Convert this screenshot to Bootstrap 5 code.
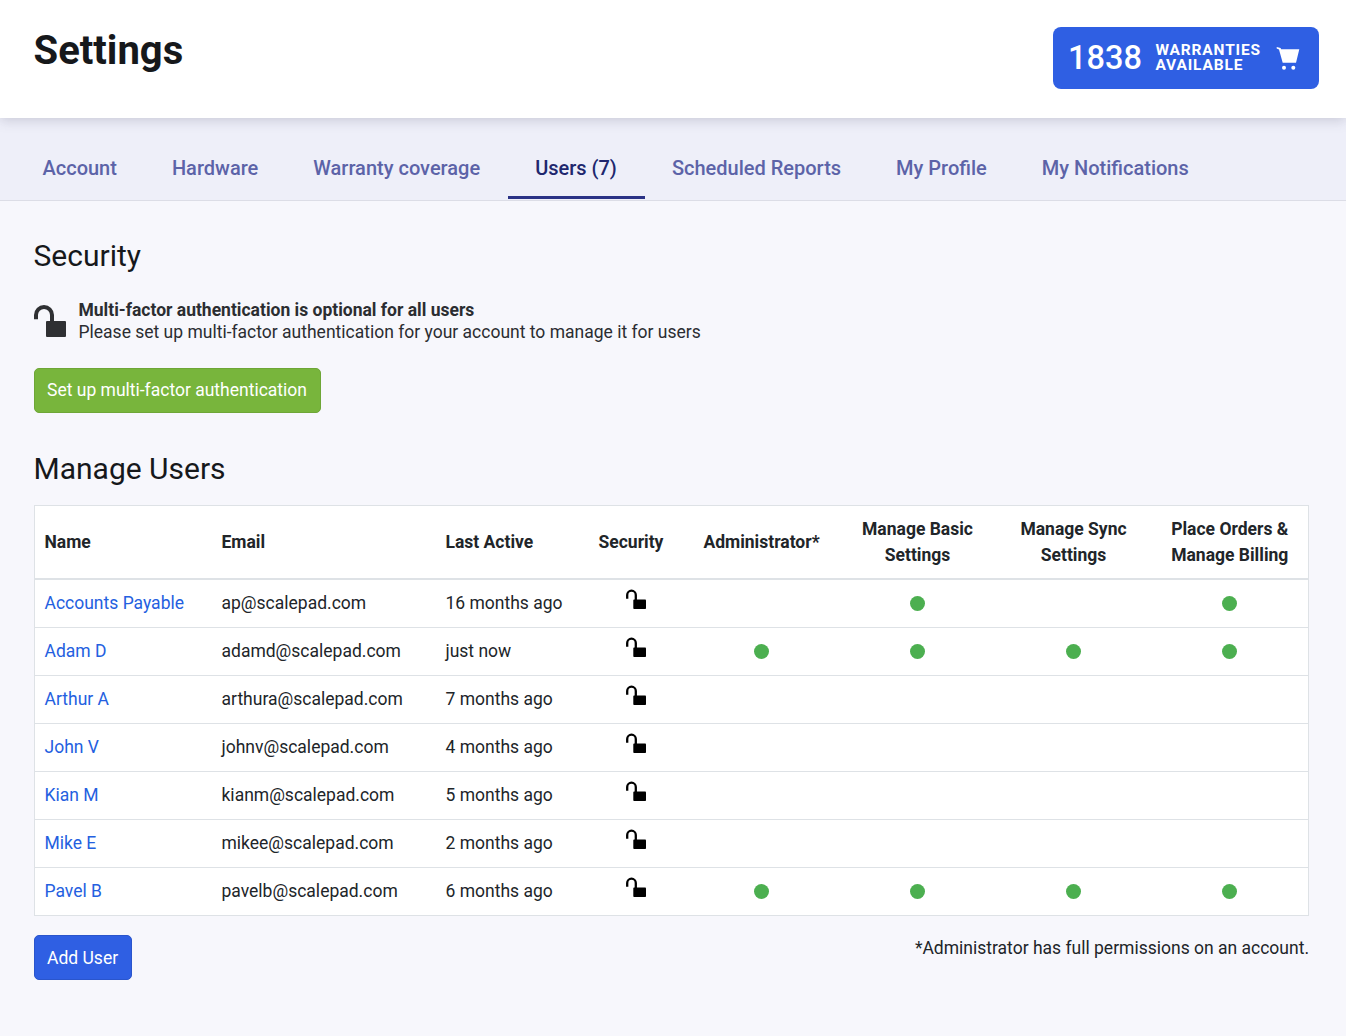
<!DOCTYPE html>
<html lang="en">
<head>
<meta charset="utf-8">
<title>Settings</title>
<link href="https://cdn.jsdelivr.net/npm/bootstrap@5.3.0/dist/css/bootstrap.min.css" rel="stylesheet">
<style>
body{font-family:Roboto,"Liberation Sans",sans-serif;background:#f7f7fc;color:#212529;font-size:17.5px;line-height:22px;letter-spacing:0}
.top-bar{background:#fff;height:118px;padding:27px 27px 0 33.5px;box-shadow:0 2px 12px rgba(60,60,90,.22);position:relative;z-index:1}
.page-title{font-size:40px;line-height:48px;font-weight:700;color:#16181b;margin:0}
.warranty-box{width:266px;height:62px;background:#2f5fe3;border-radius:8px;color:#fff;padding:0 19px 0 15px;text-decoration:none}
.warranty-num{font-size:32.5px;font-weight:500;letter-spacing:0;line-height:40px;margin-bottom:1px}
.warranty-lbl{font-size:15.5px;line-height:15px;font-weight:700;letter-spacing:.85px;margin:0 0 1px 13.5px}
.tab-strip{background:#eeeff9;height:83px;border-bottom:1px solid #dcdde6;padding:0 0 0 15px;gap:0}
.tab-strip .nav-link{color:#5c63a8;font-size:20px;line-height:24px;font-weight:500;padding:38px 27.5px 18px;height:81px;border-bottom:2px solid transparent;border-radius:0}
.tab-strip .nav-link.active{color:#20276e;border-bottom:3px solid #2a3286;height:81px;padding-right:28.5px;margin-right:-1px}
.main-area{padding:36px 37px 0 34px}
.sect-title{font-size:30px;line-height:38px;font-weight:400;color:#16181b;margin:0 0 0 -.5px}
.mfa-row{margin-top:24px;gap:12.5px;line-height:22px;color:#2b2d31}
.mfa-row svg{flex:none;margin-top:6px}
.mfa-row b{font-weight:700}
.btn-mfa{background:#78b53c;border:1px solid #6ea637;color:#fff;font-size:17.5px;line-height:23px;padding:10px 13px 10px 12px;border-radius:5px;margin-top:25px}
.btn-mfa:hover{background:#6ea637;color:#fff;border-color:#6ea637}
.manage-title{margin-top:37px}
.user-tbl{table-layout:fixed;width:1275px;margin:17px 0 0;background:#fff;border:1px solid #dee2e6;--bs-table-bg:#fff;font-size:17.5px;line-height:26px}
.user-tbl th,.user-tbl td{padding:0 10px;vertical-align:middle;border-bottom:1px solid #dee2e6}
.user-tbl th:first-child,.user-tbl td:first-child{padding-left:9.5px}
.user-tbl td{padding-bottom:2px}
.user-tbl thead th{height:73px;font-weight:700;border-bottom:2px solid #dee2e6;color:#212529;line-height:26px}
.user-tbl tbody tr{height:48px}
.user-tbl tbody tr:first-child{height:49px}
.user-tbl tbody tr:first-child td{padding-bottom:0}
.user-tbl tbody tr:last-child td{border-bottom:0}
.user-tbl a{color:#2460e0;text-decoration:none}
.cw-name{width:177px}.cw-mail{width:224px}.cw-last{width:153px}.cw-sec{width:95px}.cw-perm{width:156px}
.perm-dot{display:block;width:15px;height:15px;border-radius:50%;background:#4caf50;margin:1px auto 0}
.lock-cell svg{display:block;margin:-7px auto 0 27px}
.user-tbl tbody tr:first-child .lock-cell svg{margin-top:-8px}
.btm-row{width:1275px;margin-top:19px}
.btn-add{background:#2f5fe3;border:1px solid #2a55cc;color:#fff;font-size:17.5px;line-height:23px;padding:11px 13px 9px 12px;border-radius:5px}
.btn-add:hover{background:#2a55cc;color:#fff}
.foot-note{margin-top:2px;line-height:22px;color:#212529}
</style>
</head>
<body>
<svg width="0" height="0" class="d-block position-absolute" aria-hidden="true"><symbol id="lk" viewBox="0 0 20 20"><path d="M1.2 9.7V6A4.3 4.3 0 0 1 9.8 6V11" fill="none" stroke="#000" stroke-width="2.3"/><rect x="7.3" y="10.6" width="12.7" height="9.4" rx=".8"/></symbol></svg>
<header class="top-bar d-flex justify-content-between align-items-start">
  <h1 class="page-title">Settings</h1>
  <a href="#" class="warranty-box d-flex align-items-center">
    <span class="warranty-num">1838</span>
    <span class="warranty-lbl flex-grow-1">WARRANTIES<br>AVAILABLE</span>
    <svg width="24" height="23" viewBox="0 0 24 23" fill="#fff" aria-hidden="true"><path d="M.7 0 4.6 1 5.1 2.3H23.3L20 15.7H6.7L3 2.6.7 1.6Z"/><circle cx="8" cy="20.7" r="2"/><circle cx="17.3" cy="20.7" r="2"/></svg>
  </a>
</header>
<nav class="nav tab-strip">
  <a class="nav-link" href="#">Account</a>
  <a class="nav-link" href="#">Hardware</a>
  <a class="nav-link" href="#">Warranty coverage</a>
  <a class="nav-link active" href="#">Users (7)</a>
  <a class="nav-link" href="#">Scheduled Reports</a>
  <a class="nav-link" href="#">My Profile</a>
  <a class="nav-link" href="#">My Notifications</a>
</nav>
<main class="main-area">
  <h2 class="sect-title">Security</h2>
  <div class="mfa-row d-flex">
    <svg width="32" height="32" viewBox="0 0 32 32" fill="#2f3033" aria-hidden="true"><path d="M2 14.3V10A8 8 0 0 1 18 10V17" fill="none" stroke="#2f3033" stroke-width="4"/><rect x="12" y="16" width="20" height="16" rx="1"/></svg>
    <div><b>Multi-factor authentication is optional for all users</b><br>Please set up multi-factor authentication for your account to manage it for users</div>
  </div>
  <a href="#" class="btn btn-mfa">Set up multi-factor authentication</a>
  <h2 class="sect-title manage-title">Manage Users</h2>
  <table class="table user-tbl">
    <colgroup><col class="cw-name"><col class="cw-mail"><col class="cw-last"><col class="cw-sec"><col class="cw-perm"><col class="cw-perm"><col class="cw-perm"><col></colgroup>
    <thead><tr><th>Name</th><th>Email</th><th>Last Active</th><th>Security</th><th class="text-center">Administrator*</th><th class="text-center">Manage Basic<br>Settings</th><th class="text-center">Manage Sync<br>Settings</th><th class="text-center">Place Orders &amp;<br>Manage Billing</th></tr></thead>
    <tbody>
      <tr><td><a href="#">Accounts Payable</a></td><td>ap@scalepad.com</td><td>16 months ago</td><td class="lock-cell"><svg width="20" height="20"><use href="#lk"/></svg></td><td></td><td><span class="perm-dot"></span></td><td></td><td><span class="perm-dot"></span></td></tr>
      <tr><td><a href="#">Adam D</a></td><td>adamd@scalepad.com</td><td>just now</td><td class="lock-cell"><svg width="20" height="20"><use href="#lk"/></svg></td><td><span class="perm-dot"></span></td><td><span class="perm-dot"></span></td><td><span class="perm-dot"></span></td><td><span class="perm-dot"></span></td></tr>
      <tr><td><a href="#">Arthur A</a></td><td>arthura@scalepad.com</td><td>7 months ago</td><td class="lock-cell"><svg width="20" height="20"><use href="#lk"/></svg></td><td></td><td></td><td></td><td></td></tr>
      <tr><td><a href="#">John V</a></td><td>johnv@scalepad.com</td><td>4 months ago</td><td class="lock-cell"><svg width="20" height="20"><use href="#lk"/></svg></td><td></td><td></td><td></td><td></td></tr>
      <tr><td><a href="#">Kian M</a></td><td>kianm@scalepad.com</td><td>5 months ago</td><td class="lock-cell"><svg width="20" height="20"><use href="#lk"/></svg></td><td></td><td></td><td></td><td></td></tr>
      <tr><td><a href="#">Mike E</a></td><td>mikee@scalepad.com</td><td>2 months ago</td><td class="lock-cell"><svg width="20" height="20"><use href="#lk"/></svg></td><td></td><td></td><td></td><td></td></tr>
      <tr><td><a href="#">Pavel B</a></td><td>pavelb@scalepad.com</td><td>6 months ago</td><td class="lock-cell"><svg width="20" height="20"><use href="#lk"/></svg></td><td><span class="perm-dot"></span></td><td><span class="perm-dot"></span></td><td><span class="perm-dot"></span></td><td><span class="perm-dot"></span></td></tr>
    </tbody>
  </table>
  <div class="btm-row d-flex justify-content-between align-items-start">
    <a href="#" class="btn btn-add">Add User</a>
    <div class="foot-note">*Administrator has full permissions on an account.</div>
  </div>
</main>
<script src="https://cdn.jsdelivr.net/npm/bootstrap@5.3.0/dist/js/bootstrap.bundle.min.js"></script>
</body>
</html>
